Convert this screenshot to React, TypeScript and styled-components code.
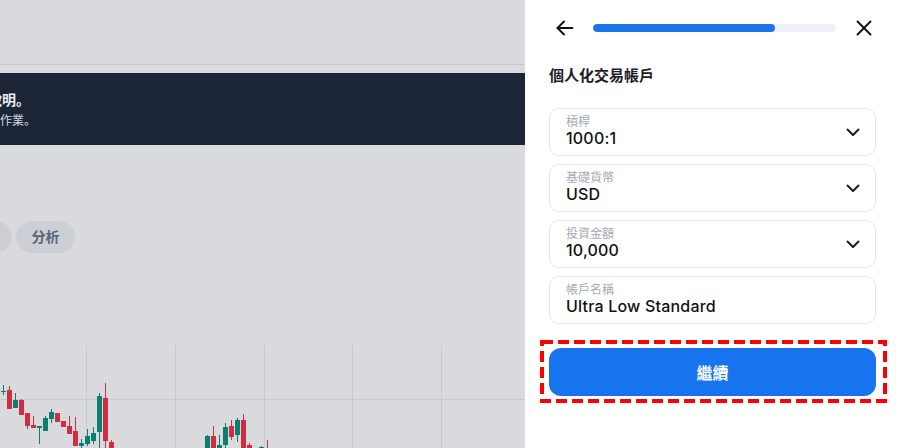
import styled, { createGlobalStyle } from 'styled-components';

const GlobalStyle = createGlobalStyle`
  html, body {
    margin: 0;
    padding: 0;
    height: 100%;
    overflow: hidden;
  }
  body {
    font-family: Inter, "Noto Sans CJK SC", sans-serif;
    color: #1c1c28;
  }
  * {
    box-sizing: border-box;
  }
`;

const Screen = styled.div`
  display: flex;
  width: 900px;
  height: 448px;
  overflow: hidden;
`;

const Backdrop = styled.div`
  flex: 1;
  display: flex;
  flex-direction: column;
  min-width: 0;
  overflow: hidden;
  background: #d9dadd;
`;

const TopBar = styled.div`
  height: 65px;
  flex-shrink: 0;
  border-bottom: 1px solid #c3c8ce;
`;

const Banner = styled.div`
  display: flex;
  flex-direction: column;
  justify-content: center;
  gap: 2px;
  height: 72px;
  margin-top: 8px;
  padding: 16px 0;
  background: #1b2537;
  color: #e9ecf1;
  white-space: nowrap;
`;

const BannerTitle = styled.div`
  margin-left: -96px;
  font-family: "Noto Sans CJK SC", sans-serif;
  font-size: 14px;
  font-weight: 700;
  line-height: 20px;
`;

const BannerText = styled.div`
  margin-left: -96px;
  font-family: "Noto Sans CJK SC", sans-serif;
  font-size: 12px;
  line-height: 18px;
  color: #d3d8e0;
`;

const PillRow = styled.div`
  display: flex;
  gap: 4px;
  margin-top: 76px;
  margin-left: -47px;
`;

const Pill = styled.div`
  display: flex;
  align-items: center;
  justify-content: center;
  width: 59px;
  height: 32px;
  padding-bottom: 2px;
  border-radius: 16px;
  background: #ccd0d6;
  color: #5a6374;
  font-family: "Noto Sans CJK SC", sans-serif;
  font-size: 14px;
  font-weight: 700;
`;

const ChartArea = styled.div`
  margin-top: 92px;
  height: 103px;
  flex-shrink: 0;
`;

const Panel = styled.aside`
  width: 375px;
  flex-shrink: 0;
  display: flex;
  flex-direction: column;
  padding: 12px 24px 0;
  background: #ffffff;
`;

const Header = styled.div`
  display: flex;
  align-items: center;
  gap: 12px;
  height: 32px;
`;

const IconButton = styled.button<{ $size: number }>`
  display: flex;
  align-items: center;
  justify-content: center;
  width: ${(p) => p.$size}px;
  height: 32px;
  padding: 0;
  border: 0;
  background: transparent;
  color: #111111;
  flex-shrink: 0;
`;

const CloseButton = styled(IconButton)`
  margin-left: 4px;
`;

const Progress = styled.div`
  flex: 1;
  height: 8px;
  border-radius: 4px;
  background: #eef2f7;
  overflow: hidden;
`;

const ProgressFill = styled.div`
  height: 100%;
  border-radius: 4px;
  background: #1a73e8;
`;

const Title = styled.h2`
  margin: 21px 0 0;
  font-family: "Noto Sans CJK SC", sans-serif;
  font-size: 15px;
  font-weight: 700;
  line-height: 20px;
  color: #1c1c28;
`;

const Fields = styled.div`
  display: flex;
  flex-direction: column;
  gap: 8px;
  margin-top: 23px;
`;

const Field = styled.div`
  display: flex;
  align-items: center;
  height: 48px;
  padding: 0 10px 0 16px;
  border: 1px solid #e2e6ef;
  border-radius: 10px;
`;

const FieldText = styled.div`
  flex: 1;
  display: flex;
  flex-direction: column;
  padding-bottom: 2px;
`;

const FieldLabel = styled.span`
  font-family: "Noto Sans CJK SC", sans-serif;
  font-size: 12px;
  line-height: 14px;
  color: #a4a9b6;
`;

const FieldValue = styled.span`
  font-family: Inter, "Noto Sans CJK SC", sans-serif;
  font-size: 16px;
  font-weight: 500;
  line-height: 20px;
  letter-spacing: 0.2px;
  color: #111111;
`;

const ButtonWrap = styled.div`
  position: relative;
  margin-top: 24px;
`;

const Highlight = styled.svg`
  position: absolute;
  top: -8px;
  left: -9px;
  pointer-events: none;
`;

const ContinueButton = styled.button`
  display: flex;
  align-items: center;
  justify-content: center;
  width: 100%;
  height: 48px;
  border: 0;
  border-radius: 12px;
  background: #1873ee;
  color: #ffffff;
  font-family: "Noto Sans CJK SC", sans-serif;
  font-size: 16px;
  font-weight: 700;
`;

// [left x, body top, body bottom, wick top, wick bottom, rising]
const candles: [number, number, number, number, number, boolean][] = [
  [1, 391, 392, 385, 395, true],
  [7, 390, 409, 386, 409, false],
  [13, 400, 408, 393, 408, true],
  [19, 400, 415, 399, 415, false],
  [25, 413, 426, 413, 429, false],
  [31, 425, 428, 416, 428, false],
  [37, 426, 428, 426, 444, true],
  [43, 418, 431, 416, 431, true],
  [49, 412, 419, 409, 423, true],
  [55, 413, 422, 413, 422, false],
  [61, 421, 427, 421, 427, false],
  [67, 426, 434, 416, 434, false],
  [73, 431, 446, 417, 446, false],
  [79, 443, 446, 439, 450, true],
  [85, 436, 444, 429, 446, true],
  [91, 433, 441, 427, 444, true],
  [97, 396, 432, 393, 450, true],
  [103, 398, 441, 383, 450, false],
  [109, 442, 450, 440, 450, false],
  [205, 436, 450, 435, 450, true],
  [211, 436, 450, 426, 450, false],
  [217, 445, 450, 435, 450, true],
  [223, 427, 445, 423, 450, true],
  [229, 426, 437, 420, 440, false],
  [235, 420, 435, 418, 442, true],
  [241, 420, 450, 414, 450, false],
  [247, 445, 450, 443, 450, false],
  [259, 447, 449, 446, 450, true],
  [265, 448, 450, 440, 450, false],
];

const gridX = [86, 175, 264, 352, 441];

function CandleChart() {
  const top = 345;
  return (
    <svg width="525" height="103" viewBox="0 0 525 103">
      {gridX.map((x) => (
        <line key={x} x1={x + 0.5} y1={0} x2={x + 0.5} y2={103} stroke="#c8cace" strokeWidth="1" />
      ))}
      <line x1={0} y1={54.5} x2={525} y2={54.5} stroke="#c8cace" strokeWidth="1" />
      {candles.map(([x, bt, bb, wt, wb, up], i) => {
        const color = up ? '#0b7f6d' : '#cf2e42';
        return (
          <g key={i}>
            <rect x={x + 2} y={wt - top} width={1} height={wb - wt} fill={color} />
            <rect x={x} y={bt - top} width={5} height={Math.max(bb - bt, 1)} fill={color} />
          </g>
        );
      })}
    </svg>
  );
}

const ArrowLeftIcon = () => (
  <svg width="18" height="16" viewBox="0 0 18 16" fill="none" stroke="currentColor" strokeWidth="1.9" strokeLinecap="round" strokeLinejoin="round">
    <path d="M16.5 8H1.5" />
    <path d="M8 1.5L1.5 8L8 14.5" />
  </svg>
);

const CloseIcon = () => (
  <svg width="16" height="16" viewBox="0 0 16 16" fill="none" stroke="currentColor" strokeWidth="1.9" strokeLinecap="round">
    <path d="M1.5 1.5L14.5 14.5" />
    <path d="M14.5 1.5L1.5 14.5" />
  </svg>
);

const ChevronIcon = () => (
  <svg width="24" height="24" viewBox="0 0 24 24" fill="none" stroke="#1c1c28" strokeWidth="2" strokeLinecap="round" strokeLinejoin="round">
    <path d="M6.5 9.5L12 15L17.5 9.5" />
  </svg>
);

const fields = [
  { label: '槓桿', value: '1000:1', select: true },
  { label: '基礎貨幣', value: 'USD', select: true },
  { label: '投資金額', value: '10,000', select: true },
  { label: '帳戶名稱', value: 'Ultra Low Standard', select: false },
];

export default function App() {
  const progress = 75;
  return (
    <>
      <GlobalStyle />
      <Screen>
        <Backdrop>
          <TopBar />
          <Banner>
            <BannerTitle>示範帳戶功能說明。</BannerTitle>
            <BannerText>請依指示完成以下作業。</BannerText>
          </Banner>
          <PillRow>
            <Pill>圖表</Pill>
            <Pill>分析</Pill>
          </PillRow>
          <ChartArea>
            <CandleChart />
          </ChartArea>
        </Backdrop>
        <Panel>
          <Header>
            <IconButton $size={32} aria-label="返回">
              <ArrowLeftIcon />
            </IconButton>
            <Progress>
              <ProgressFill style={{ width: `${progress}%` }} />
            </Progress>
            <CloseButton $size={24} aria-label="關閉">
              <CloseIcon />
            </CloseButton>
          </Header>
          <Title>個人化交易帳戶</Title>
          <Fields>
            {fields.map((f) => (
              <Field key={f.label}>
                <FieldText>
                  <FieldLabel>{f.label}</FieldLabel>
                  <FieldValue>{f.value}</FieldValue>
                </FieldText>
                {f.select && <ChevronIcon />}
              </Field>
            ))}
          </Fields>
          <ButtonWrap>
            <ContinueButton>繼續</ContinueButton>
            <Highlight width="347" height="63" viewBox="0 0 347 63">
              <rect x="2" y="2" width="343" height="59" fill="none" stroke="#ff0000" strokeWidth="4" strokeDasharray="11 5" />
            </Highlight>
          </ButtonWrap>
        </Panel>
      </Screen>
    </>
  );
}
